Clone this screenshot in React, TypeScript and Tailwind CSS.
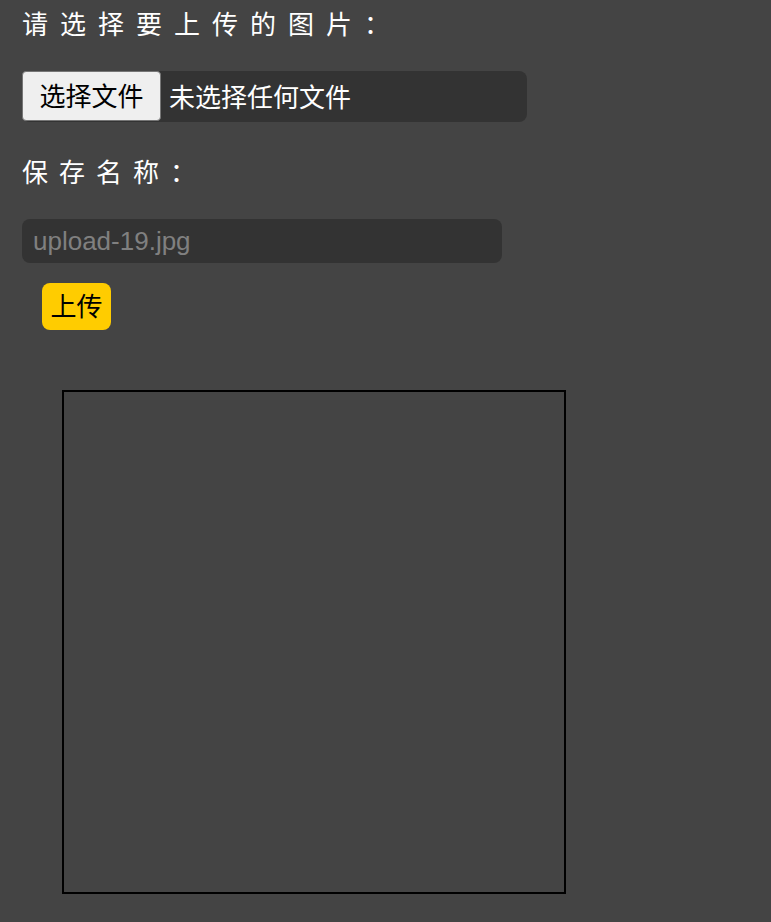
const FONT = "font-['Liberation_Sans','Noto_Sans_CJK_SC',sans-serif]";

export default function App() {
  return (
    <div className={`min-h-[922px] bg-[#444444] pl-[22px] text-white ${FONT}`}>
      {/* Title */}
      <div className="flex h-[49px] items-center pt-[2px] text-[26px] tracking-[12px]">请选择要上传的图片：</div>

      {/* File picker */}
      <div className="mt-[22px] flex h-[51px] w-[505px] items-center rounded-[8px] bg-[#333333]">
        <button
          type="button"
          className="flex h-[50px] w-[139px] items-center justify-center self-start rounded-[4px] border border-[#767676] bg-[#efefef] pt-[3px] text-[26px] text-black"
        >
          选择文件
        </button>
        <span className="ml-[8px] pt-[3px] text-[26px]">未选择任何文件</span>
      </div>

      {/* Save name */}
      <div className="mt-[25px] flex h-[50px] items-center pt-[2px] text-[26px] tracking-[11px]">保存名称：</div>

      <input
        type="text"
        placeholder="upload-19.jpg"
        className="mt-[22px] block h-[44px] w-[480px] rounded-[8px] bg-[#333333] px-[11px] text-[26px] text-white outline-none placeholder:text-[#808080]"
      />

      <button
        type="button"
        className="ml-[20px] mt-[20px] flex h-[47px] w-[69px] items-center justify-center rounded-[8px] bg-[#ffcc00] pt-[2px] text-[26px] text-black"
      >
        上传
      </button>

      {/* Preview */}
      <div className="ml-[40px] mt-[60px] h-[504px] w-[504px] border-2 border-black" />
    </div>
  );
}
